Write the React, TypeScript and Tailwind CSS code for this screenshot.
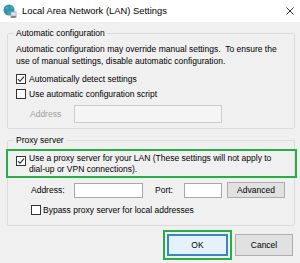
const Checkbox = ({ checked = false }: { checked?: boolean }) => (
  <span className="flex h-[10px] w-[10px] shrink-0 items-center justify-center border border-[#333333] bg-white">
    {checked && (
      <svg width="8" height="8" viewBox="0 0 8 8" fill="none">
        <path d="M1 4.2 L3 6.3 L7 1.6" stroke="#222222" strokeWidth="1.1" />
      </svg>
    )}
  </span>
);

const WindowIcon = () => (
  <svg width="14" height="15" viewBox="0 0 14 15">
    <circle cx="6" cy="6" r="5.5" fill="#2f8fc7" />
    <path d="M2.5 3.5 Q4 2 5.5 3 L5 5 L3 5.5 Z M7 1.5 Q10 2 10.8 4.5 L8.5 5 L7.5 3 Z M4 8 L6.5 7.5 L7 10.5 L5 11 Z" fill="#4fb36a" />
    <rect x="7.5" y="7.5" width="6" height="6.5" fill="#9aa4ad" />
    <rect x="8.3" y="8.3" width="4.4" height="3.4" fill="#dfe7ee" />
    <rect x="8.5" y="12.4" width="4" height="1" fill="#5f6a73" />
  </svg>
);

export default function App() {
  return (
    <div className="h-[263px] w-[300px] overflow-hidden bg-[#f0f0f0] font-['Liberation_Sans',Arial,sans-serif] text-[8.5px] text-black">
      {/* Title bar */}
      <div className="flex h-[22px] items-center bg-white pl-[3px] pr-[6px]">
        <WindowIcon />
        <span className="ml-[5px] text-[9.4px] leading-none">Local Area Network (LAN) Settings</span>
        <svg className="ml-auto" width="8" height="8" viewBox="0 0 8 8">
          <path d="M0.5 0.5 L7.5 7.5 M7.5 0.5 L0.5 7.5" stroke="#333333" strokeWidth="1" />
        </svg>
      </div>

      <div className="pl-[7px] pr-[5px]">
        {/* Automatic configuration */}
        <fieldset className="mt-[6px] rounded-[2px] border border-[#dcdcdc] pb-[5px] pl-[8px] pt-[4px]">
          <legend className="-ml-[2px] px-[2px] leading-[11px]">Automatic configuration</legend>
          <p className="leading-[12px]">
            Automatic configuration may override manual settings.&nbsp; To ensure the
            <br />
            use of manual settings, disable automatic configuration.
          </p>
          <label className="mt-[6px] flex h-[12px] items-center gap-[3px]">
            <Checkbox checked />
            <span>Automatically detect settings</span>
          </label>
          <label className="mt-[3px] flex h-[12px] items-center gap-[3px]">
            <Checkbox />
            <span>Use automatic configuration script</span>
          </label>
          <div className="mt-[5px] flex items-center pl-[14px]">
            <span className="w-[44px] text-[#a0a0a0]">Address</span>
            <div className="h-[18px] w-[148px] border border-[#cccccc] bg-[#f5f5f5]" />
          </div>
        </fieldset>

        {/* Proxy server */}
        <fieldset className="mt-[6px] rounded-[2px] border border-[#dcdcdc] pb-[9px] pl-[8px] pt-[3px]">
          <legend className="-ml-[2px] px-[2px] leading-[11px]">Proxy server</legend>
          <label className="-ml-[10px] -mr-[3px] flex items-start gap-[3px] border-2 border-[#27ae48] pb-[1px] pl-[8px] pt-[2px]">
            <span className="mt-[3px]">
              <Checkbox checked />
            </span>
            <span className="leading-[11px]">
              Use a proxy server for your LAN (These settings will not apply to
              <br />
              dial-up or VPN connections).
            </span>
          </label>
          <div className="mt-[4px] flex h-[16px] items-center pl-[15px]">
            <span className="w-[43px]">Address:</span>
            <div className="h-[15px] w-[69px] border border-[#a8a8a8] bg-white" />
            <span className="ml-[12px] w-[29px]">Port:</span>
            <div className="h-[15px] w-[38px] border border-[#a8a8a8] bg-white" />
            <button className="ml-[5px] h-[16px] w-[58px] border border-[#adadad] bg-[#e1e1e1] leading-none">
              Advanced
            </button>
          </div>
          <label className="mt-[6px] flex h-[12px] items-center gap-[2px] pl-[15px]">
            <Checkbox />
            <span>Bypass proxy server for local addresses</span>
          </label>
        </fieldset>
      </div>

      {/* Buttons */}
      <div className="mt-[4px] flex items-center justify-end pr-[7px]">
        <div className="border-2 border-[#27ae48] p-[2px]">
          <button className="flex h-[22px] w-[61px] items-center justify-center border-2 border-[#3a87c8] bg-[#e5f1fb] leading-none">
            OK
          </button>
        </div>
        <button className="ml-[3px] h-[22px] w-[58px] border border-[#adadad] bg-[#e1e1e1] leading-none">
          Cancel
        </button>
      </div>
    </div>
  );
}
